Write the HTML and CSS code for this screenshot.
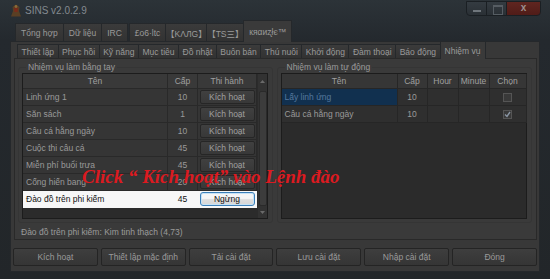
FILE: index.html
```html
<!DOCTYPE html>
<html>
<head>
  <meta charset="utf-8">
  <title>SINS v2.0.2.9</title>
  <link rel="stylesheet" href="styles.css">
</head>
<body>
  <div class="window">
    <div class="titlebar">
      <svg class="app-icon" viewBox="0 0 12 13" width="12" height="13">
        <path d="M6 0.5 L9.5 3 L9 7 L11 12.5 L1 12.5 L3 7 L2.5 3 Z" fill="#5a3f24"/>
        <path d="M4 4 L8 4 L7.5 8 L4.5 8 Z" fill="#7a2a1a"/>
        <circle cx="6" cy="2.5" r="1.4" fill="#8a6a3a"/>
      </svg>
      <span class="title">SINS v2.0.2.9</span>
      <div class="caption">
        <span class="cap-btn min"></span>
        <span class="cap-btn max"></span>
        <span class="cap-btn close">x</span>
      </div>
    </div>

    <div class="client">
      <div class="tabs top-tabs">
        <span class="tab">Tổng hợp</span>
        <span class="tab">Dữ liệu</span>
        <span class="tab">IRC</span>
        <span class="tab gap">£o6·ltc</span>
        <span class="tab cjk">【KΛЛG】</span>
        <span class="tab cjk">【TS三】</span>
        <span class="tab active">кяαиʐłє™</span>
      </div>

      <div class="outer-panel">
        <div class="tabs sub-tabs">
          <span class="tab">Thiết lập</span>
          <span class="tab">Phục hồi</span>
          <span class="tab">Kỹ năng</span>
          <span class="tab">Mục tiêu</span>
          <span class="tab">Đồ nhật</span>
          <span class="tab">Buôn bán</span>
          <span class="tab">Thú nuôi</span>
          <span class="tab">Khởi động</span>
          <span class="tab">Đàm thoại</span>
          <span class="tab">Báo động</span>
          <span class="tab active">Nhiệm vụ</span>
        </div>

        <div class="inner-panel">
          <div class="groups">
            <fieldset class="group manual">
              <legend>Nhiệm vụ làm bằng tay</legend>
              <div class="list">
                <div class="list-body">
                  <div class="row head">
                    <span class="cell c-name">Tên</span>
                    <span class="cell c-lvl">Cấp</span>
                    <span class="cell c-act">Thi hành</span>
                  </div>
                  <div class="row">
                    <span class="cell c-name">Linh ứng 1</span>
                    <span class="cell c-lvl">10</span>
                    <span class="cell c-act"><button class="mini">Kích hoạt</button></span>
                  </div>
                  <div class="row">
                    <span class="cell c-name">Săn sách</span>
                    <span class="cell c-lvl">1</span>
                    <span class="cell c-act"><button class="mini">Kích hoạt</button></span>
                  </div>
                  <div class="row">
                    <span class="cell c-name">Câu cá hằng ngày</span>
                    <span class="cell c-lvl">10</span>
                    <span class="cell c-act"><button class="mini">Kích hoạt</button></span>
                  </div>
                  <div class="row">
                    <span class="cell c-name">Cuộc thi câu cá</span>
                    <span class="cell c-lvl">45</span>
                    <span class="cell c-act"><button class="mini">Kích hoạt</button></span>
                  </div>
                  <div class="row">
                    <span class="cell c-name">Miễn phí buổi trưa</span>
                    <span class="cell c-lvl">45</span>
                    <span class="cell c-act"><button class="mini">Kích hoạt</button></span>
                  </div>
                  <div class="row">
                    <span class="cell c-name">Cống hiến bang</span>
                    <span class="cell c-lvl">20</span>
                    <span class="cell c-act"><button class="mini">Kích hoạt</button></span>
                  </div>
                  <div class="row lit">
                    <span class="cell c-name">Đào đồ trên phi kiếm</span>
                    <span class="cell c-lvl">45</span>
                    <span class="cell c-act"><button class="mini stop">Ngừng</button></span>
                  </div>
                </div>
                <div class="scrollbar">
                  <span class="sb-arrow up"><svg viewBox="0 0 5 3" width="5" height="3"><path d="M0 3 L2.5 0 L5 3 Z" fill="#6a6a6a"/></svg></span>
                  <span class="sb-thumb"></span>
                  <span class="sb-arrow down"><svg viewBox="0 0 5 3" width="5" height="3"><path d="M0 0 L2.5 3 L5 0 Z" fill="#6a6a6a"/></svg></span>
                </div>
              </div>
            </fieldset>

            <fieldset class="group auto">
              <legend>Nhiệm vụ làm tự động</legend>
              <div class="list">
                <div class="list-body">
                  <div class="row head">
                    <span class="cell c-tname">Tên</span>
                    <span class="cell c-lvl">Cấp</span>
                    <span class="cell c-time">Hour</span>
                    <span class="cell c-time">Minute</span>
                    <span class="cell c-pick">Chọn</span>
                  </div>
                  <div class="row">
                    <span class="cell c-tname selected">Lấy linh ứng</span>
                    <span class="cell c-lvl">10</span>
                    <span class="cell c-time"></span>
                    <span class="cell c-time"></span>
                    <span class="cell c-pick"><span class="check"></span></span>
                  </div>
                  <div class="row">
                    <span class="cell c-tname">Câu cá hằng ngày</span>
                    <span class="cell c-lvl">10</span>
                    <span class="cell c-time"></span>
                    <span class="cell c-time"></span>
                    <span class="cell c-pick"><span class="check"><svg viewBox="0 0 7 7" width="7" height="7"><path d="M1 3.5 L3 5.5 L6 1" fill="none" stroke="#8a96a4" stroke-width="1.4"/></svg></span></span>
                  </div>
                </div>
              </div>
            </fieldset>
          </div>
          <div class="status">Đào đồ trên phi kiếm: Kim tinh thạch (4,73)</div>
        </div>

        <div class="actions">
          <button class="btn">Kích hoạt</button>
          <button class="btn">Thiết lập mặc định</button>
          <button class="btn">Tải cài đặt</button>
          <button class="btn">Lưu cài đặt</button>
          <button class="btn">Nhập cài đặt</button>
          <button class="btn">Đóng</button>
        </div>
      </div>
    </div>

    <div class="callout">Click “ Kích hoạt” vào Lệnh đào</div>
  </div>
</body>
</html>
```

FILE: styles.css
```css
* {
  box-sizing: border-box;
}
body {
  margin: 0;
  background: #1d2125;
  font-family: "Liberation Sans", "Noto Sans CJK SC", sans-serif;
  font-size: 8.5px;
  color: #9a9a9a;
}
button {
  font-family: inherit;
  font-size: inherit;
  padding: 0;
  color: inherit;
}

/* window frame */
.window {
  position: relative;
  width: 550px;
  height: 279px;
  display: flex;
  flex-direction: column;
  overflow: hidden;
  background: linear-gradient(#2c3338, #24292e 40px, #222629);
}
.titlebar {
  height: 20px;
  display: flex;
  align-items: center;
  padding-left: 10px;
}
.app-icon {
  display: block;
}
.title {
  margin-left: 3px;
  color: #848a90;
  font-size: 10px;
}
.caption {
  margin-left: auto;
  margin-right: 9px;
  margin-top: 1px;
  align-self: flex-start;
  display: flex;
}
.cap-btn {
  position: relative;
  height: 15px;
  border: 1px solid #1a1f23;
  background: linear-gradient(#343b41, #2a3035);
}
.cap-btn.min {
  width: 21px;
  border-radius: 0 0 0 4px;
}
.cap-btn.max {
  width: 21px;
  margin-left: -1px;
}
.cap-btn.close {
  width: 35px;
  margin-left: -1px;
  border-radius: 0 0 4px 0;
  background: linear-gradient(#66292340, #501c18), #5e241f;
  color: #9c9090;
  text-align: center;
  font-size: 10px;
  font-weight: bold;
  line-height: 12px;
}
.cap-btn.min::after {
  content: "";
  position: absolute;
  left: 6px;
  top: 8px;
  width: 8px;
  height: 2px;
  background: #6f767c;
}
.cap-btn.max::after {
  content: "";
  position: absolute;
  left: 6px;
  top: 3px;
  width: 8px;
  height: 7px;
  border: 1px solid #565d63;
  border-top-width: 2px;
}

/* client area */
.client {
  flex: 1;
  display: flex;
  flex-direction: column;
  padding: 0 10px 7px;
}
.tabs {
  display: flex;
  align-items: flex-end;
}
.tab {
  display: flex;
  align-items: center;
  height: 18px;
  padding: 0 5px;
  margin-right: -1px;
  border: 1px solid #25282b;
  border-bottom: none;
  background: linear-gradient(#3b3b3b, #323232);
  white-space: nowrap;
}
.tab.active {
  position: relative;
  z-index: 1;
  height: 22px;
  margin-bottom: -1px;
  background: #3a3a3a;
}
.tab.cjk {
  font-feature-settings: "halt";
  padding: 0 4px;
}
.top-tabs {
  height: 21px;
  padding-left: 5px;
}
.top-tabs .gap {
  margin-left: 2px;
}
.outer-panel {
  flex: 1;
  display: flex;
  flex-direction: column;
  padding: 0 2px 5px;
  border: 1px solid #25282b;
  background: #383838;
}
.sub-tabs {
  height: 16px;
  padding-left: 4px;
}
.sub-tabs .tab {
  height: 14px;
  padding: 0 3.5px;
}
.sub-tabs .tab.active {
  height: 18px;
  padding: 0 4px;
}
.inner-panel {
  height: 182px;
  margin-left: 1px;
  padding: 3px 4px 2px 3px;
  border: 1px solid #292929;
  background: #3a3a3a;
}

/* group boxes and lists */
.groups {
  display: flex;
  gap: 4px;
}
.group {
  margin: 0;
  min-width: 0;
  padding: 0 4px 3px 3px;
  border: 1px solid #353535;
  border-radius: 3px;
}
.group.manual {
  width: 255px;
}
.group.auto {
  width: 256px;
}
.group legend {
  height: 11px;
  line-height: 11px;
  padding: 0 2px;
  margin-left: 4px;
}
.list {
  display: flex;
  height: 146px;
  border: 1px solid #1c1c1c;
  background: #2b2b2b;
}
.list-body {
  flex: 1;
}
.row {
  display: flex;
  height: 17px;
}
.row.head {
  height: 15px;
}
.cell {
  display: flex;
  align-items: center;
  justify-content: center;
  border-right: 1px solid #292929;
  border-bottom: 1px solid #292929;
  background: #353535;
  white-space: nowrap;
  overflow: hidden;
}
.head .cell {
  background: #393939;
  color: #a0a0a0;
}
.c-name {
  width: 145px;
  justify-content: flex-start;
  padding-left: 3px;
}
.head .c-name,
.head .c-tname {
  justify-content: center;
  padding-left: 0;
}
.c-lvl {
  width: 30px;
}
.c-act {
  width: 59px;
}
.mini {
  width: 55px;
  height: 14px;
  border: 1px solid #262626;
  border-radius: 2px;
  background: linear-gradient(#404040, #383838);
  color: #a0a0a0;
}
.row.lit .cell {
  background: #f7f7f7;
  color: #111;
  border-color: #f7f7f7;
}
.mini.stop {
  border: 1px solid #3c7fb8;
  border-radius: 3px;
  background: linear-gradient(#f5f5f5 45%, #dedede 55%, #d6d6d6);
  box-shadow: inset 0 0 0 1px #c5e2f6;
  color: #111;
}
.scrollbar {
  width: 9px;
  display: flex;
  flex-direction: column;
  background: #323232;
}
.sb-arrow {
  display: flex;
  align-items: center;
  justify-content: center;
  height: 15px;
}
.sb-arrow.down {
  height: 12px;
}
.sb-thumb {
  flex: 1;
  margin: 2px 0 0 1px;
  border: 1px solid #2a2a2a;
  border-radius: 2px;
  background: #3c3c3c;
}

/* automatic list */
.group.auto .cell {
  background: #2f2f2f;
  border-color: #262626;
}
.group.auto .head .cell {
  background: #363636;
}
.c-tname {
  width: 116px;
  justify-content: flex-start;
  padding-left: 3px;
}
.c-tname.selected {
  background: #11304f !important;
  color: #55789e;
}
.c-time {
  width: 31px;
}
.c-pick {
  width: 37px;
}
.check {
  display: flex;
  align-items: center;
  justify-content: center;
  width: 9px;
  height: 9px;
  border: 1px solid #555;
  background: #393939;
}

.status {
  height: 10px;
  line-height: 10px;
  margin-top: 4px;
  padding-left: 3px;
}

/* bottom buttons */
.actions {
  display: flex;
  gap: 3px;
  margin-top: 8px;
}
.btn {
  flex: 1;
  height: 18px;
  border: 1px solid #242424;
  border-radius: 2px;
  background: linear-gradient(#3e3e3e, #353535);
  color: #9a9a9a;
}

/* red hint written over the screenshot */
.callout {
  position: absolute;
  left: 82px;
  top: 166px;
  font-family: "Liberation Serif", serif;
  font-size: 19px;
  font-style: italic;
  font-weight: bold;
  color: #dc1a20;
  white-space: nowrap;
}
```
